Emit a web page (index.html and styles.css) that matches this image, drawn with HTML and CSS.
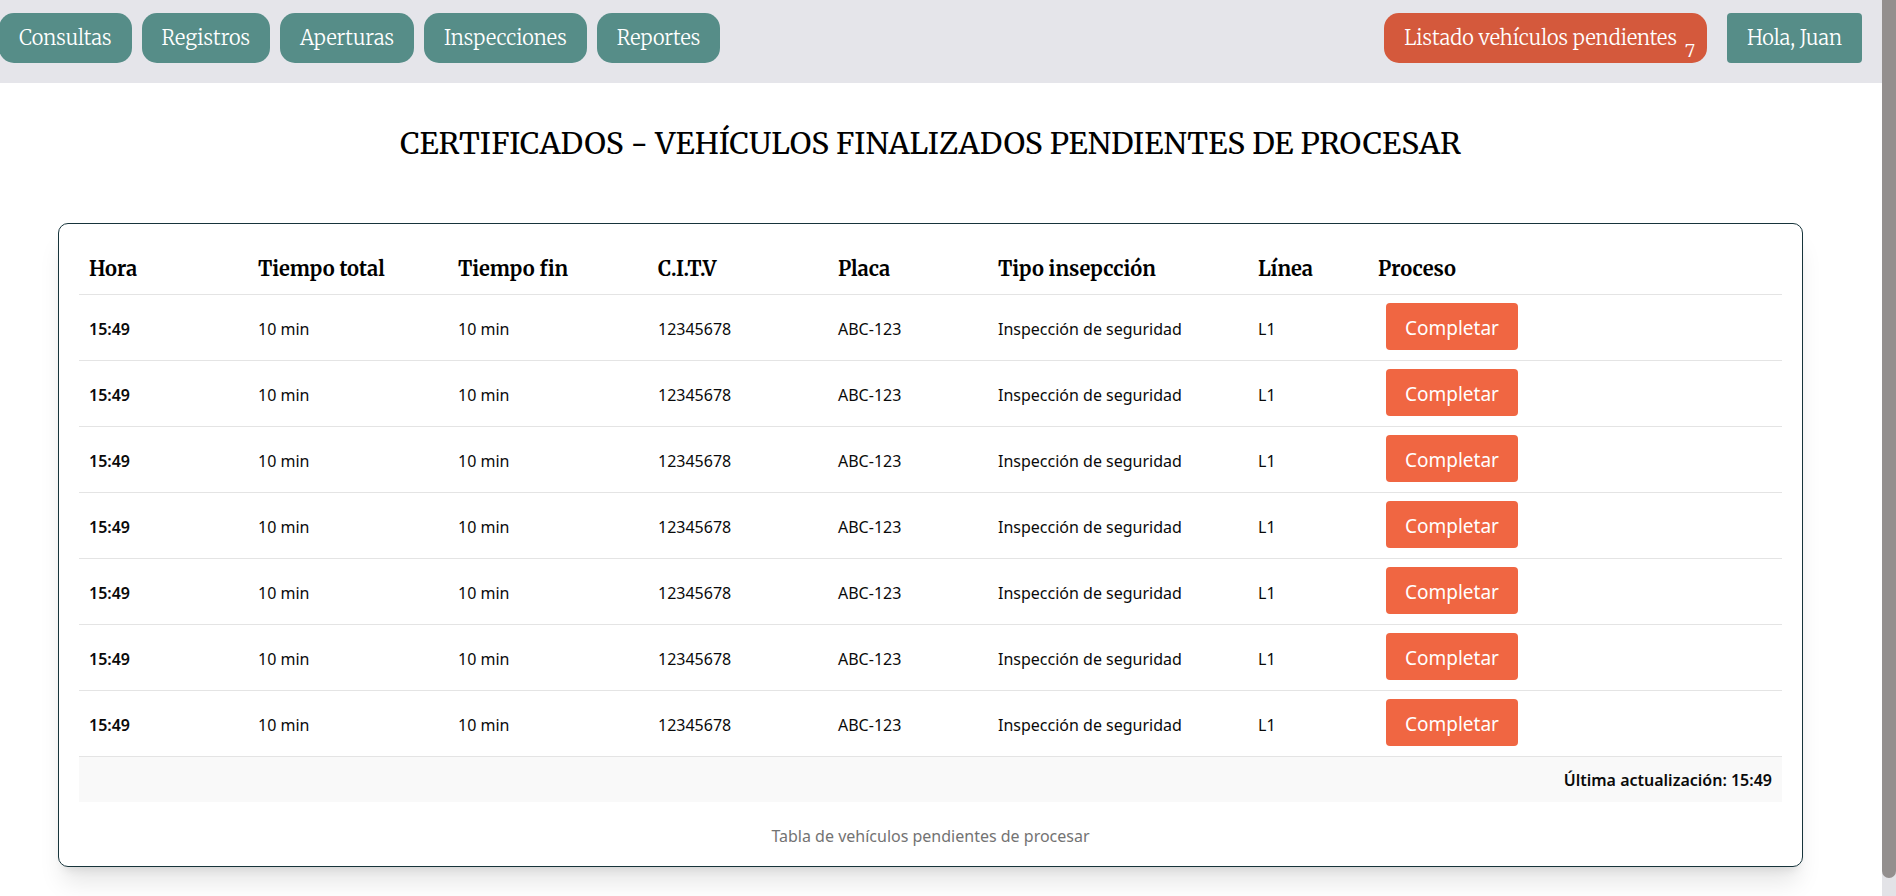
FILE: index.html
```
<!DOCTYPE html>
<html lang="es">
<head>
<meta charset="utf-8">
<title>Certificados</title>
<link rel="stylesheet" href="styles.css">
</head>
<body>
<div class="page">
  <header class="topbar">
    <nav class="menu">
      <button class="btn btn-first" type="button">Consultas</button>
      <button class="btn" type="button">Registros</button>
      <button class="btn" type="button">Aperturas</button>
      <button class="btn" type="button">Inspecciones</button>
      <button class="btn" type="button">Reportes</button>
    </nav>
    <div class="session">
      <a class="btn btn-pending" href="#pendientes">Listado vehículos pendientes<span class="count">7</span></a>
      <button class="btn btn-user" type="button">Hola, Juan</button>
    </div>
  </header>
  <main class="content">
    <h1 class="title">CERTIFICADOS - VEHÍCULOS FINALIZADOS PENDIENTES DE PROCESAR</h1>
    <section class="card" id="pendientes">
      <table class="table">
        <caption>Tabla de vehículos pendientes de procesar</caption>
        <colgroup><col class="w-hora"><col class="w-tiempo"><col class="w-tiempo"><col class="w-citv"><col class="w-placa"><col class="w-tipo"><col class="w-linea"><col></colgroup>
        <thead>
          <tr><th>Hora</th><th>Tiempo total</th><th>Tiempo fin</th><th>C.I.T.V</th><th>Placa</th><th>Tipo insepcción</th><th>Línea</th><th>Proceso</th></tr>
        </thead>
        <tbody>
          <tr><td class="strong">15:49</td><td>10 min</td><td>10 min</td><td>12345678</td><td>ABC-123</td><td>Inspección de seguridad</td><td>L1</td><td class="action"><button class="complete" type="button">Completar</button></td></tr>
          <tr><td class="strong">15:49</td><td>10 min</td><td>10 min</td><td>12345678</td><td>ABC-123</td><td>Inspección de seguridad</td><td>L1</td><td class="action"><button class="complete" type="button">Completar</button></td></tr>
          <tr><td class="strong">15:49</td><td>10 min</td><td>10 min</td><td>12345678</td><td>ABC-123</td><td>Inspección de seguridad</td><td>L1</td><td class="action"><button class="complete" type="button">Completar</button></td></tr>
          <tr><td class="strong">15:49</td><td>10 min</td><td>10 min</td><td>12345678</td><td>ABC-123</td><td>Inspección de seguridad</td><td>L1</td><td class="action"><button class="complete" type="button">Completar</button></td></tr>
          <tr><td class="strong">15:49</td><td>10 min</td><td>10 min</td><td>12345678</td><td>ABC-123</td><td>Inspección de seguridad</td><td>L1</td><td class="action"><button class="complete" type="button">Completar</button></td></tr>
          <tr><td class="strong">15:49</td><td>10 min</td><td>10 min</td><td>12345678</td><td>ABC-123</td><td>Inspección de seguridad</td><td>L1</td><td class="action"><button class="complete" type="button">Completar</button></td></tr>
          <tr><td class="strong">15:49</td><td>10 min</td><td>10 min</td><td>12345678</td><td>ABC-123</td><td>Inspección de seguridad</td><td>L1</td><td class="action"><button class="complete" type="button">Completar</button></td></tr>
        </tbody>
        <tfoot>
          <tr><td class="updated" colspan="8">Última actualización: 15:49</td></tr>
        </tfoot>
      </table>
    </section>
  </main>
</div>
<div class="scrollbar"><div class="thumb"></div></div>
</body>
</html>
```
FILE: styles.css
```
* { box-sizing: border-box; }
body {
  margin: 0;
  display: flex;
  min-height: 100vh;
  background: #fff;
  color: #0a0a0a;
  font: 16px/24px "Noto Sans", "Open Sans", sans-serif;
}
.page { flex: 1; min-width: 0; }

.topbar {
  display: flex;
  justify-content: space-between;
  padding: 13px 20px 20px 0;
  background: #e5e5ea;
}
.menu { display: flex; gap: 10px; }
.session { display: flex; gap: 20px; }
.btn {
  position: relative;
  height: 50px;
  padding: 0 20px;
  border: 0;
  border-radius: 15px;
  background: #568d88;
  color: #fff;
  font: 300 20px/50px Merriweather, "Noto Serif", serif;
  white-space: nowrap;
  text-decoration: none;
}
.btn-first { margin-left: -1px; }
.btn-pending { padding-right: 30px; background: #d4593c; }
.btn-user { border-radius: 4px; }
.count {
  position: absolute;
  right: 12px;
  bottom: 0;
  font-size: 18px;
  line-height: 24px;
}

.content { padding: 40px 79px 28px 58px; }
.title {
  margin: 0 0 60px;
  color: #000;
  font: 400 30px/40px Merriweather, "Noto Serif", serif;
  text-align: center;
}
.card {
  padding: 20px;
  border: 1px solid #17343b;
  border-radius: 10px;
  box-shadow: 0 20px 25px -5px rgba(0, 0, 0, 0.1), 0 8px 10px -6px rgba(0, 0, 0, 0.1);
}
.table {
  width: 100%;
  table-layout: fixed;
  border-collapse: collapse;
  caption-side: bottom;
}
.table caption { padding-top: 24px; color: #737373; line-height: 20px; }
.table tr { border-bottom: 1px solid #e4e4e4; }
.table th {
  height: 50px;
  padding: 0 10px;
  color: #000;
  font: 700 20px/28px Merriweather, "Noto Serif", serif;
  text-align: left;
}
.table td { height: 66px; padding: 4px 10px 0; }
.table .strong { font-weight: 600; }
.table .action { padding: 0 18px 2px; }
.table tfoot tr { border-bottom: 0; background: #f9f9f9; }
.table .updated { height: 46px; padding: 2px 10px 0; font-weight: 600; text-align: right; }
.w-hora { width: 169px; }
.w-tiempo { width: 200px; }
.w-citv { width: 180px; }
.w-placa { width: 160px; }
.w-tipo { width: 260px; }
.w-linea { width: 120px; }
.complete {
  display: block;
  height: 47px;
  padding: 4px 19px 0;
  border: 0;
  border-radius: 4px;
  background: #f06642;
  color: #fff;
  font: 400 19px/28px "Noto Sans", "Open Sans", sans-serif;
}

.scrollbar { width: 14px; background: #e3e3e7; }
.thumb { height: 98vh; border-radius: 0 0 7px 7px; background: #938f8e; }
```
